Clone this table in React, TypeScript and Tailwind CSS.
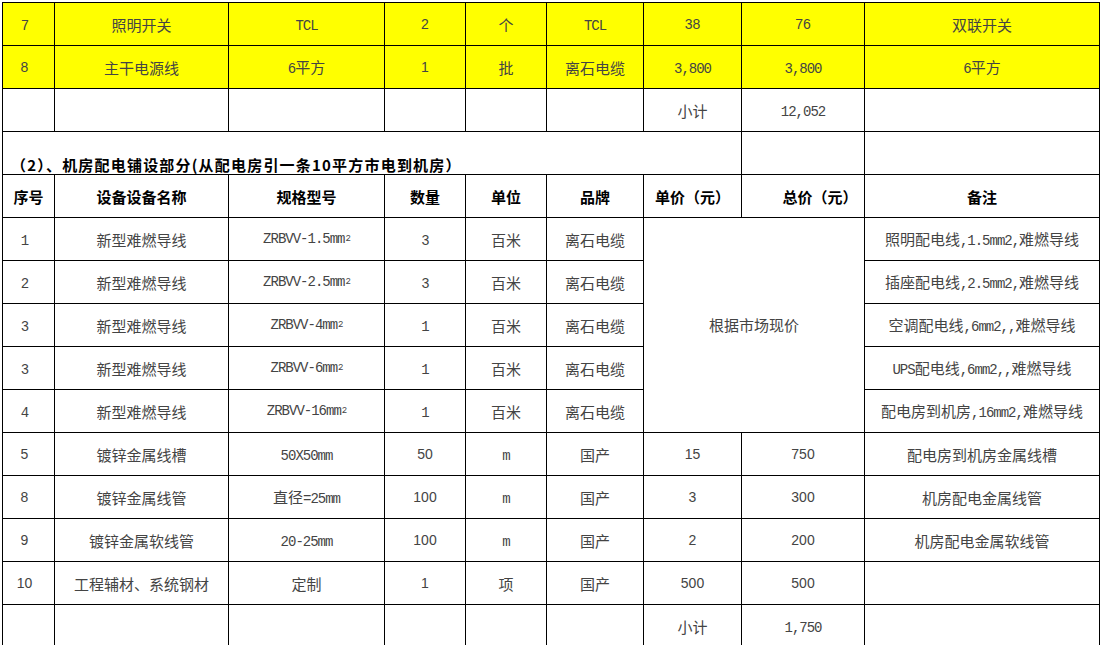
import React from "react";

type Cell = {
  t?: string;
  node?: React.ReactNode;
  k?: "txt" | "num" | "head";
  cls?: string;
};

const MONO = "font-['Liberation_Mono',monospace] text-[14px] tracking-[-1px]";

// Latin runs are drawn narrower, as in the SimSun cells of the sheet
function Txt({ s }: { s: string }) {
  const parts = s.split(/([\x00-\x7F]+)/);
  return (
    <span>
      {parts.map((p, i) =>
        p === "" ? null : /^[\x00-\x7F]+$/.test(p) ? (
          <span key={i} className={MONO}>
            {p}
          </span>
        ) : (
          <span key={i}>{p}</span>
        )
      )}
    </span>
  );
}

function Wire({ s }: { s: string }) {
  return (
    <span className={MONO}>
      {s}
      <sup className="text-[9px] relative -top-[2px] ml-[1px]">2</sup>
    </span>
  );
}

const YELLOW = "bg-[#ffff00]";

const rows: Cell[][] = [
  [
    { t: "7", cls: "pr-2" },
    { t: "照明开关" },
    { t: "TCL" },
    { t: "2", k: "num" },
    { t: "个" },
    { t: "TCL" },
    { t: "38", k: "num" },
    { t: "76", k: "num" },
    { t: "双联开关" },
  ].map((c) => ({ ...c, cls: `${c.cls ?? ""} ${YELLOW}` }) as Cell),
  [
    { t: "8", k: "num", cls: "pr-2" },
    { t: "主干电源线" },
    { t: "6平方" },
    { t: "1", k: "num" },
    { t: "批" },
    { t: "离石电缆" },
    { t: "3,800" },
    { t: "3,800" },
    { t: "6平方" },
  ].map((c) => ({ ...c, cls: `${c.cls ?? ""} ${YELLOW}` }) as Cell),
  [{}, {}, {}, {}, {}, {}, { t: "小计" }, { t: "12,052" }, {}],
];

const header: Cell[] = [
  { t: "序号" },
  { t: "设备设备名称" },
  { t: "规格型号" },
  { t: "数量" },
  { t: "单位" },
  { t: "品牌" },
  { t: "单价（元）" },
  { t: "总价（元）", cls: "pl-[34px]" },
  { t: "备注" },
].map((c) => ({ ...c, k: "head" }) as Cell);

const wires = [
  ["1", "ZRBVV-1.5mm", "3", "照明配电线,1.5mm2,难燃导线"],
  ["2", "ZRBVV-2.5mm", "3", "插座配电线,2.5mm2,难燃导线"],
  ["3", "ZRBVV-4mm", "1", "空调配电线,6mm2,,难燃导线"],
  ["3", "ZRBVV-6mm", "1", "UPS配电线,6mm2,,难燃导线"],
  ["4", "ZRBVV-16mm", "1", "配电房到机房,16mm2,难燃导线"],
];

const tail: Cell[][] = [
  [
    { t: "5", k: "num", cls: "pr-2" },
    { t: "镀锌金属线槽" },
    { t: "50X50mm" },
    { t: "50", k: "num" },
    { t: "m" },
    { t: "国产" },
    { t: "15", k: "num" },
    { t: "750", k: "num" },
    { t: "配电房到机房金属线槽" },
  ],
  [
    { t: "8", k: "num", cls: "pr-2" },
    { t: "镀锌金属线管" },
    { t: "直径=25mm" },
    { t: "100", k: "num" },
    { t: "m" },
    { t: "国产" },
    { t: "3", k: "num" },
    { t: "300", k: "num" },
    { t: "机房配电金属线管" },
  ],
  [
    { t: "9", k: "num", cls: "pr-2" },
    { t: "镀锌金属软线管" },
    { t: "20-25mm" },
    { t: "100", k: "num" },
    { t: "m" },
    { t: "国产" },
    { t: "2", k: "num" },
    { t: "200", k: "num" },
    { t: "机房配电金属软线管" },
  ],
  [
    { t: "10", k: "num", cls: "pr-2" },
    { t: "工程辅材、系统钢材" },
    { t: "定制" },
    { t: "1", k: "num" },
    { t: "项" },
    { t: "国产" },
    { t: "500", k: "num" },
    { t: "500", k: "num" },
    {},
  ],
  [{}, {}, {}, {}, {}, {}, { t: "小计" }, { t: "1,750" }, {}],
];

const base =
  "flex items-center justify-center border-r border-b border-black whitespace-nowrap overflow-hidden leading-none";

function Td({ c }: { c: Cell }) {
  let inner: React.ReactNode = c.node;
  let look = "text-[#444] text-[15px]";
  if (c.t !== undefined) {
    if (c.k === "num") {
      inner = <span className="font-['Liberation_Sans',sans-serif] text-[14px]">{c.t}</span>;
    } else if (c.k === "head") {
      inner = c.t;
      look = "text-black text-[15px] font-bold";
    } else {
      inner = <Txt s={c.t} />;
    }
  }
  return <div className={`${base} ${look} ${c.cls ?? ""}`}>{inner}</div>;
}

export default function App() {
  return (
    <div className="w-[1100px] h-[645px] overflow-hidden bg-white font-['Noto_Sans_CJK_SC',sans-serif]">
      <div className="ml-[2px] mt-[2px] w-fit grid grid-cols-[52px_174px_156px_81px_81px_97px_98px_123px_235px] auto-rows-[43px] border-l border-t border-black">
        {rows.map((r, i) => r.map((c, j) => <Td key={`a${i}-${j}`} c={c} />))}

        {/* section title */}
        <div className="col-span-7 flex items-end pl-[8px] pb-[2px] border-r border-b border-black text-[15px] font-bold text-black tracking-[1.2px] whitespace-nowrap leading-none">
          （2）、机房配电铺设部分(从配电房引一条10平方市电到机房）
        </div>
        <div className="border-r border-b border-black" />
        <div className="border-r border-b border-black" />

        {header.map((c, j) => (
          <Td key={`h${j}`} c={c} />
        ))}

        {wires.map((w, i) => (
          <React.Fragment key={`w${i}`}>
            <Td c={{ t: w[0], cls: "pr-2" }} />
            <Td c={{ t: "新型难燃导线" }} />
            <Td c={{ node: <Wire s={w[1]} /> }} />
            <Td c={{ t: w[2] }} />
            <Td c={{ t: "百米" }} />
            <Td c={{ t: "离石电缆" }} />
            {i === 0 && (
              <div className="col-span-2 row-span-5 flex items-center justify-center border-r border-b border-black text-[15px] text-[#444]">
                根据市场现价
              </div>
            )}
            <Td c={{ t: w[3] }} />
          </React.Fragment>
        ))}

        {tail.map((r, i) => r.map((c, j) => <Td key={`t${i}-${j}`} c={c} />))}
      </div>
    </div>
  );
}
